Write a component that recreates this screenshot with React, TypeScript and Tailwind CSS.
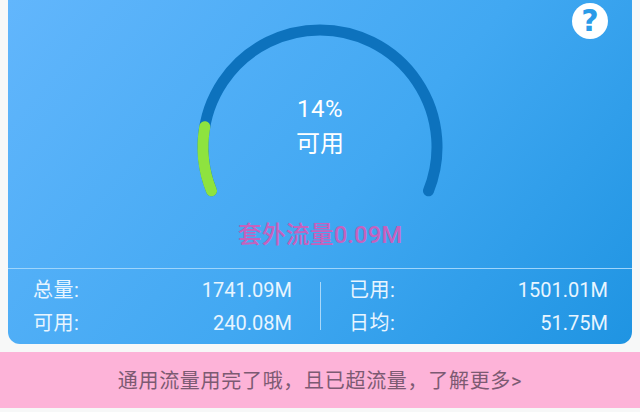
const FONT = "font-['Roboto','Noto_Sans_CJK_SC',sans-serif]";

function polar(angle: number) {
  const rad = (angle * Math.PI) / 180;
  return `${130 + 117 * Math.cos(rad)} ${130 + 117 * Math.sin(rad)}`;
}

function Gauge() {
  // Track runs clockwise from lower left to lower right, green part is the 14% left
  return (
    <svg viewBox="0 0 260 190" className="w-[260px] h-[190px]">
      <path
        d={`M ${polar(158)} A 117 117 0 1 1 ${polar(22)}`}
        fill="none"
        stroke="#0d72bd"
        strokeWidth="11"
        strokeLinecap="round"
      />
      <path
        d={`M ${polar(158)} A 117 117 0 0 1 ${polar(190)}`}
        fill="none"
        stroke="#8ee33f"
        strokeWidth="11"
        strokeLinecap="round"
      />
    </svg>
  );
}

function Stat({ label, value }: { label: string; value: string }) {
  return (
    <div className="flex items-center justify-between h-[33px]">
      <span className="tracking-[0.5px]">{label}</span>
      <span>{value}</span>
    </div>
  );
}

export default function App() {
  return (
    <div className={`${FONT} w-[640px] h-[412px] bg-[#f7f8f8] flex flex-col overflow-hidden`}>
      <div className="relative mx-2 h-[344px] shrink-0 rounded-b-[12px] bg-[linear-gradient(130deg,#62b6fc,#41a8f2_55%,#1f94e2)] text-white flex flex-col">
        <div className="absolute right-[24px] top-[3px] w-9 h-9 rounded-full bg-white flex items-center justify-center text-[#2a9be8] text-[30px] leading-none font-bold font-['DejaVu_Sans',sans-serif]">
          ?
        </div>

        <div className="h-[268px] shrink-0 flex flex-col items-center pt-[17px]">
          <div className="relative w-[260px] h-[190px]">
            <Gauge />
            <div className="absolute left-0 right-0 top-[75px] flex flex-col items-center text-[24px] leading-[35px]">
              <span className="tracking-[0.5px]">14%</span>
              <span>可用</span>
            </div>
          </div>
          <div className="mt-[13px] text-[24px] leading-[30px] font-medium text-[#c562bd]">套外流量0.09M</div>
        </div>

        <div className="h-px shrink-0 bg-[#9fd5fb]" />

        <div className="flex items-center text-[20px] leading-none text-[#e8f5ff] pt-[4px]">
          <div className="flex-1 flex flex-col pl-[25px] pr-[28px]">
            <Stat label="总量:" value="1741.09M" />
            <Stat label="可用:" value="240.08M" />
          </div>
          <div className="w-px h-[48px] bg-[#a8d8fa]" />
          <div className="flex-1 flex flex-col pl-[28px] pr-[24px]">
            <Stat label="已用:" value="1501.01M" />
            <Stat label="日均:" value="51.75M" />
          </div>
        </div>
      </div>

      <div className="mt-2 h-[56px] shrink-0 pt-[1px] bg-[#fdb3d8] flex items-center justify-center text-[20px] tracking-[0.7px] text-[#7c5a72]">
        通用流量用完了哦，且已超流量，了解更多&gt;
      </div>
    </div>
  );
}
